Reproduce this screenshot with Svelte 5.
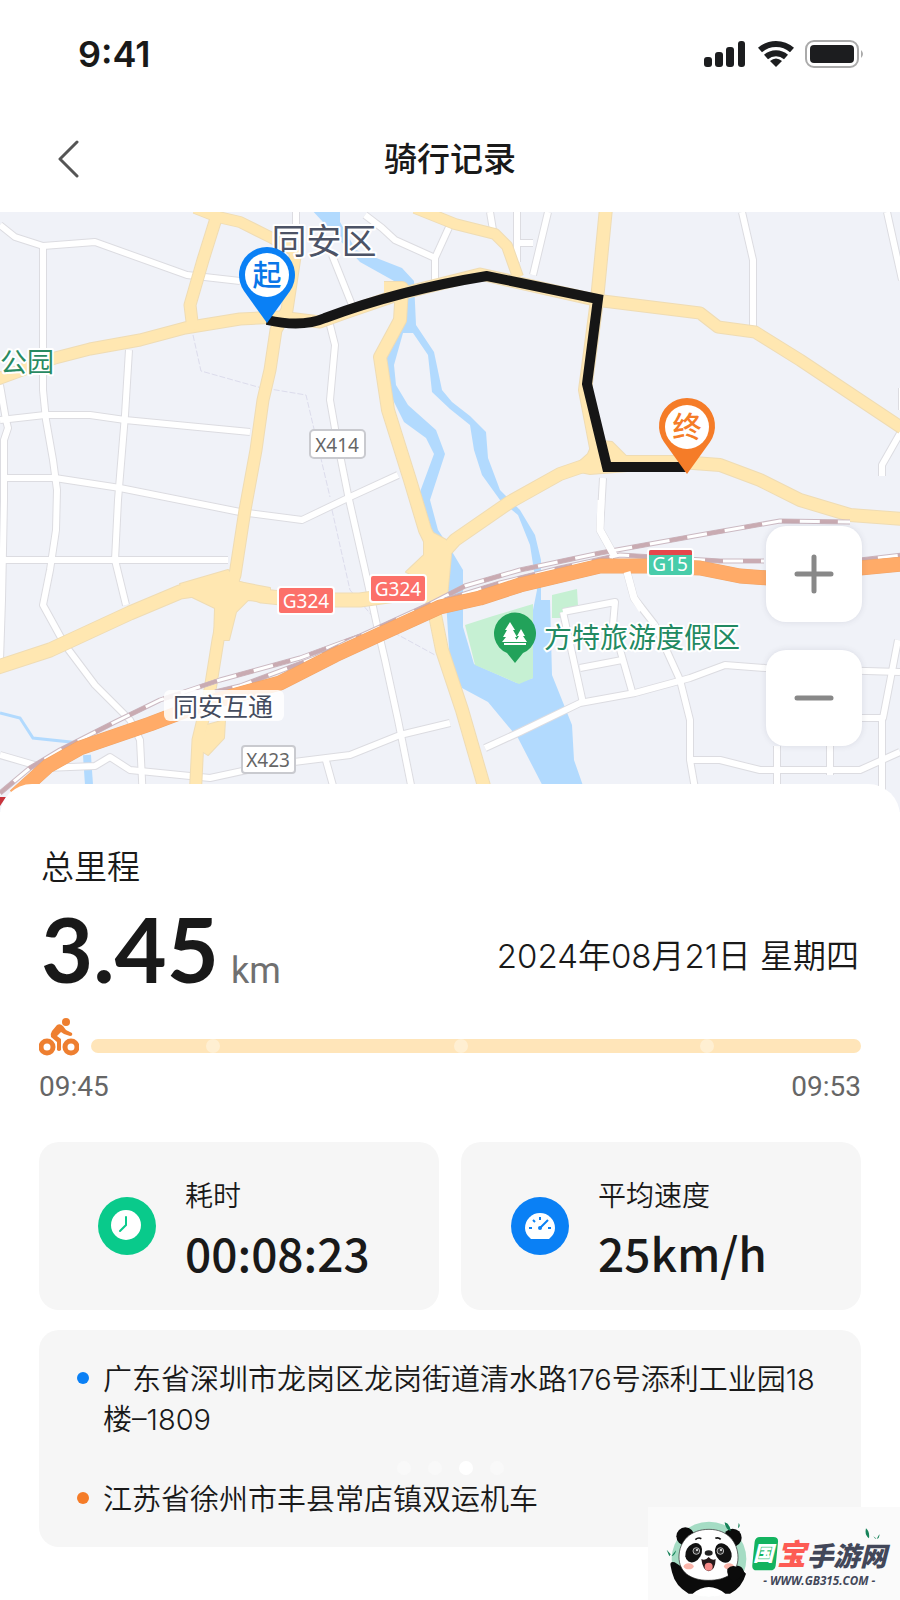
<script lang="ts">
	type Stat = { kind: 'time' | 'speed'; label: string; value: string };

	const stats: Stat[] = [
		{ kind: 'time', label: '耗时', value: '00:08:23' },
		{ kind: 'speed', label: '平均速度', value: '25km/h' }
	];

	const places = [
		{ color: '#0a80f5', text: '广东省深圳市龙岗区龙岗街道清水路176号添利工业园18楼–1809' },
		{ color: '#f57c28', text: '江苏省徐州市丰县常店镇双运机车' }
	];

	// progress bar checkpoints, in percent of the ride
	const checkpoints = [15.8, 48, 80];

	// local streets, thin and white
	const streets = [
		'M0 225L15 237L43 246L95 242L187 275L240 281',
		'M43 246V390L46 420L53 460L57 490L56 530L50 570L43 605L65 645L95 685L130 720L140 740L143 800',
		'M0 420L45 415H90L125 420L250 432',
		'M6 478H55L120 488L240 512L302 520L350 497L398 475',
		'M129 350L125 415L118 500L115 560L126 605',
		'M0 560H228',
		'M330 325L335 345L330 400L337 440L348 495L365 570L378 630L385 660L398 720L414 800',
		'M0 385L6 420L8 428L4 440V500L2 600L0 660',
		'M332 255L352 305M296 212V240',
		'M365 215L382 228L395 240L435 258L450 225M435 258V280',
		'M490 212L493 230M517 212V262M548 212L533 275M517 243H533',
		'M742 212L753 260V330',
		'M887 212L902 280M902 388V410M902 430L882 465V476',
		'M603 478L600 530L615 557M627 572L634 598L655 625',
		'M655 625L680 680L690 720V760L697 800',
		'M485 748L520 732L580 703L635 693L690 678L725 665L765 668L900 672',
		'M563 612L615 602L613 625L633 695M563 612L583 703M580 668L622 660',
		'M690 760H720L760 770H860L900 752M777 746V800M830 746V775M882 718V800M898 640L883 718H850',
		'M0 755L45 768L95 766L110 757L130 770L210 778L270 765L350 755L400 735L450 723M325 757L337 800'
	];

	// main roads, yellow
	const roads = [
		{ w: 11, d: 'M-5 380L55 358L90 349L140 340L185 328L240 319L280 317L320 322L345 313L400 294L480 274L595 300L700 313L718 327L755 332L800 360L902 428' },
		{ w: 11, d: 'M218 212L203 260L190 305L193 330' },
		{ w: 10, d: 'M195 208L218 217L240 222L272 238L293 250' },
		{ w: 11, d: 'M296 250L287 310L276 330L270 370L263 400L256 450L245 510L235 575L226 600L218 640L210 690L198 740L195 800' },
		{ w: 13, d: 'M-5 668L50 650L130 613L180 592L228 585L262 596L300 600H360L430 590' },
		{ w: 12, d: 'M384 288H402L400 320L380 357L388 410L410 480L425 530L437 555L432 600L442 650L462 710L488 800' },
		{ w: 12, d: 'M437 560L455 540L510 502L560 474L595 462H680L720 465L760 480L800 500L850 515L902 519' },
		{ w: 12, d: 'M606 208L597 300L585 390L598 458' },
		{ w: 10, d: 'M415 208L455 224L495 234L507 246L518 277' }
	];

	// widened crossings of the main roads
	const crossings = [
		'M180 584L228 570L239 582L270 588V602L248 600L236 612L229 640L214 640L215 608L188 595Z',
		'M424 528L446 540L451 555L447 598L428 605L425 580L406 572L424 555Z',
		'M570 470L588 454L594 440L612 442L628 458L640 464V470L590 474Z',
		'M207 725L225 720L224 738L208 755L200 750Z'
	];

	const railways = [
		'M0 793L30 768L60 750L115 722L160 700L220 680L300 658L360 636L430 604L465 586L520 570L600 553L700 535L780 521L850 522',
		'M215 692L240 686L315 658L360 636M445 600L500 583L560 568L620 555L720 561H764M860 560L902 555'
	];

	const motorway = 'M15 796L48 766L80 748L150 724L200 705L280 683L335 655L385 632L440 607L480 598L520 585L600 566H650L700 568L740 576L768 578L860 568L902 564';
</script>

<main class="page">
	<header>
		<div class="status">
			<span class="clock">9:41</span>
			<svg width="160" height="30" viewBox="0 0 160 30" role="img" aria-label="信号、无线网络、电量">
				<g fill="#1c1d1f">
					<rect x="0" y="18" width="8" height="10" rx="3" />
					<rect x="11" y="13" width="8" height="15" rx="3" />
					<rect x="22" y="8" width="8" height="20" rx="3" />
					<rect x="34" y="2" width="7" height="26" rx="3" />
					<path d="M72 28L66 22Q72 17 78 22Z" />
					<rect x="106" y="6" width="44" height="18" rx="4" />
				</g>
				<g fill="none" stroke="#1c1d1f" stroke-width="6">
					<path d="M56 11a24 24 0 0 1 32 0" />
					<path d="M62 18a15 15 0 0 1 20 0" />
				</g>
				<rect x="102" y="2" width="52" height="26" rx="8" fill="none" stroke="#aaa" stroke-width="2" />
				<path d="M157 11q4 4 0 8z" fill="#aaa" />
			</svg>
		</div>
		<div class="title-bar">
			<button class="back" aria-label="返回">
				<svg width="22" height="40" viewBox="0 0 22 40"><path d="M20 3L3 20L20 37" fill="none" stroke="#555" stroke-width="3" stroke-linejoin="round" stroke-linecap="round" /></svg>
			</button>
			<h1>骑行记录</h1>
		</div>
	</header>

	<section class="map" aria-label="骑行路线">
		<svg class="canvas" viewBox="0 212 900 600" preserveAspectRatio="xMidYMid slice">
			<rect x="-900" y="212" width="2700" height="600" fill="#f0f2f8" />

			<!-- water and parks -->
			<g fill="#b2dafe">
				<path d="M310 208H340V222L356 250L402 268L414 281L416 325L434 352L442 390L452 402L470 416L486 432L488 458L500 490L520 510L535 535L541 560V600H550L552 675L572 725L574 760L588 800H550L518 738L488 702L462 688L450 665L446 600L445 550L424 530L417 500L434 454L426 438L404 422L388 390L386 360L398 320L403 286L360 262Z" />
			</g>
			<path d="M403 333H413L428 355L432 392L450 409L470 425L474 450L482 475L500 500L518 515L530 545L537 590L533 610V678L517 683L474 664L463 627V570L448 545L438 530L430 500L445 454L436 430L408 405L396 385L394 365Z" fill="#f0f2f8" />
			<path d="M465 625L493 616L533 604V678L519 684L475 665Z M552 595L577 589L578 606L565 612L563 618H552Z" fill="#c6f0d3" />
			<path d="M0 713L20 718L33 738L80 743" fill="none" stroke="#b2dafe" stroke-width="3" />
			<path d="M87 755L90 800" fill="none" stroke="#b2dafe" stroke-width="8" />
			<path d="M193 335L201 371L258 387L306 395L330 497M332 510L350 590L380 625L435 655" fill="none" stroke="#dcdcec" stroke-width="1" stroke-dasharray="6 2" />

			<g class="lines">
				{#each streets as d}<path {d} stroke="#dcdce1" stroke-width="8" />{/each}
				{#each streets as d}<path {d} stroke="#fff" stroke-width="6" />{/each}
				{#each roads as road}<path d={road.d} stroke="#efdcb4" stroke-width={road.w + 2} />{/each}
				{#each crossings as d}<path {d} stroke="#efdcb4" stroke-width="2" />{/each}
				{#each roads as road}<path d={road.d} stroke="#ffe7b1" stroke-width={road.w} />{/each}
			</g>
			{#each crossings as d}<path {d} fill="#ffe7b1" />{/each}

			<g class="lines">
				{#each railways as d}
					<path {d} stroke="#cbb9c2" stroke-width="5" />
					<path {d} stroke="#fff" stroke-width="3" />
					<path {d} stroke="#c9abb2" stroke-width="4" stroke-dasharray="18 20" />
				{/each}
				<path d={motorway} stroke="#f0a467" stroke-width="15" />
				<path d={motorway} stroke="#ffab68" stroke-width="14" />
				<path d="M601 500L600 530L615 557M627 572L634 598L642 610" stroke="#fff" stroke-width="7" />
			</g>
			<path d="M0 797H6L0 806Z" fill="#c8343c" />

			<!-- road numbers -->
			<g class="badge">
				<rect x="310" y="430" width="55" height="28" rx="4" fill="#fff" stroke="#c9cacf" stroke-width="2" />
				<text x="337" y="452" fill="#666">X414</text>
				<rect x="242" y="746" width="53" height="27" rx="3" fill="#fff" stroke="#c9cacf" stroke-width="2" />
				<text x="268" y="767" fill="#666">X423</text>
				<rect x="278" y="587" width="56" height="27" rx="3" fill="#fc7069" stroke="#fff" stroke-width="2" />
				<text x="306" y="608" fill="#fff">G324</text>
				<rect x="370" y="575" width="56" height="27" rx="3" fill="#fc7069" stroke="#fff" stroke-width="2" />
				<text x="398" y="596" fill="#fff">G324</text>
				<rect x="648" y="549" width="45" height="27" rx="3" fill="#48ccaa" stroke="#fff" stroke-width="2" />
				<path d="M649 555V552q0-2 2-2H690q2 0 2 2V555Z" fill="#e5474c" />
				<text x="670" y="571" fill="#fff">G15</text>
			</g>

			<!-- place names -->
			<rect x="164" y="690" width="120" height="31" rx="6" fill="#fff" fill-opacity="0.85" />
			<g class="place">
				<text x="223" y="716" font-size="25" fill="#444c5e">同安互通</text>
				<text x="324" y="254" font-size="35" fill="#4c5366">同安区</text>
				<text x="27" y="372" font-size="27" fill="#288a62">公园</text>
				<text x="642" y="648" font-size="28" fill="#228a62">方特旅游度假区</text>
			</g>
			<path d="M515 663L507 653A21 21 0 1 1 523 653Z" fill="#22a25a" />
			<path d="M510 622L515 630H513L517 637H515L518 642H502L506 637H503L507 630H505Z" fill="#fff" />
			<path d="M521 629L525 636H523L527 642H515L519 636H517Z" fill="#fff" />
			<path d="M504 644H526" stroke="#fff" stroke-width="2" />

			<!-- the ride itself -->
			<path d="M267 320Q302 328 325 318Q400 290 487 276L598 299L587 384L607 467H687" fill="none" stroke="#161616" stroke-width="10" />
			<g class="pin">
				<path d="M267 323L244 291A28 28 0 1 1 290 291Z" fill="#0a80f5" />
				<circle cx="267" cy="275" r="22" fill="#fff" />
				<text x="267" y="286" fill="#0a76e8">起</text>
				<path d="M687 474L664 442A28 28 0 1 1 710 442Z" fill="#f57c28" />
				<circle cx="687" cy="427" r="22" fill="#fff" />
				<text x="687" y="438" fill="#f57c28">终</text>
			</g>
		</svg>

		<div class="zoom">
			<button aria-label="放大">
				<svg width="40" height="40" viewBox="0 0 40 40"><path d="M3 20H37M20 3V37" /></svg>
			</button>
			<button aria-label="缩小">
				<svg width="40" height="40" viewBox="0 0 40 40"><path d="M3 20H37" /></svg>
			</button>
		</div>
	</section>

	<section class="sheet">
		<h2>总里程</h2>
		<div class="summary">
			<p class="distance">3.45<small>km</small></p>
			<time datetime="2024-08-21">2024年08月21日 星期四</time>
		</div>

		<div class="progress">
			<svg width="40" height="38" viewBox="0 0 40 38" aria-hidden="true">
				<g fill="none" stroke="#ee7f30" stroke-width="5">
					<circle cx="8" cy="29" r="6" />
					<circle cx="32" cy="29" r="6" />
				</g>
				<circle cx="27" cy="4" r="4" fill="#ee7f30" />
				<path d="M18 7Q21 5 24 8L27 12L33 15Q34 18 31 18L25 16L22 14L18 18L22 21V32Q20 34 18 32V24L12 19Q11 16 13 13Z" fill="#ee7f30" />
			</svg>
			<div class="bar">
				{#each checkpoints as at}
					<i style="left: {at}%"></i>
				{/each}
			</div>
		</div>
		<div class="times">
			<span>09:45</span>
			<span>09:53</span>
		</div>

		<div class="stats">
			{#each stats as stat}
				<div class="stat">
					<svg width="58" height="58" viewBox="0 0 58 58" aria-hidden="true">
						{#if stat.kind === 'time'}
							<circle cx="29" cy="29" r="29" fill="#09ca8b" />
							<circle cx="28" cy="28" r="15" fill="#fff" />
							<path d="M28 20V28L22 34" fill="none" stroke="#09ca8b" stroke-width="2" stroke-linecap="round" />
						{:else}
							<circle cx="29" cy="29" r="29" fill="#0a80f5" />
							<path d="M20 42Q14 37 14 31A15 15 0 0 1 44 31Q44 37 38 42Z" fill="#fff" />
							<path d="M18 31h3M37 31h3M22 23l2 2M29 20v3M29 31L37 23" fill="none" stroke="#0a80f5" stroke-width="2" />
							<circle cx="29" cy="31" r="2" fill="#0a80f5" />
						{/if}
					</svg>
					<div>
						<p class="label">{stat.label}</p>
						<p class="value">{stat.value}</p>
					</div>
				</div>
			{/each}
		</div>

		<ul class="places">
			{#each places as place}
				<li>
					<i style="background: {place.color}"></i>
					<span>{place.text}</span>
				</li>
			{/each}
		</ul>
		<div class="pager" aria-hidden="true"><i></i><i></i><i class="on"></i><i></i></div>
	</section>

	<div class="brand">
		<svg viewBox="24 50 756 280" role="img" aria-label="国宝手游网">
			<!-- panda -->
			<circle cx="207" cy="206" r="112" fill="#a5dcc4" />
			<path d="M92 228Q88 212 104 216L135 236H270L282 226Q306 222 312 244L318 250Q306 292 270 310H146Q106 288 96 246Z" fill="#0b0b0b" />
			<circle cx="136" cy="138" r="27" fill="#0b0b0b" />
			<circle cx="278" cy="142" r="27" fill="#0b0b0b" />
			<path d="M158 310Q206 270 256 310Q206 330 158 310Z" fill="#fff" />
			<path d="M207 117C262 117 294 155 294 202C294 246 260 270 205 270C150 270 117 244 117 200C117 152 152 117 207 117Z" fill="#fff" stroke="#222" stroke-width="2" />
			<ellipse cx="161" cy="187" rx="23" ry="31" transform="rotate(30 161 187)" fill="#111" />
			<ellipse cx="250" cy="188" rx="23" ry="31" transform="rotate(-30 250 188)" fill="#111" />
			<g stroke="#fff" stroke-width="2">
				<circle cx="169" cy="182" r="10" fill="#333" />
				<circle cx="241" cy="182" r="10" fill="#333" />
			</g>
			<circle cx="171" cy="179" r="3" fill="#fff" />
			<circle cx="243" cy="179" r="3" fill="#fff" />
			<ellipse cx="206" cy="188" rx="12" ry="8" fill="#222" />
			<path d="M184 206Q195 213 206 200Q217 213 227 206Q226 240 206 243Q188 240 184 206Z" fill="#26191a" />
			<ellipse cx="206" cy="229" rx="12" ry="12" fill="#f58987" />
			<ellipse cx="146" cy="228" rx="15" ry="9" fill="#fbb5aa" />
			<ellipse cx="267" cy="228" rx="15" ry="9" fill="#fbb5aa" />
			<path d="M166 148q9-8 18-3M226 144q9-4 16 3" fill="none" stroke="#111" stroke-width="5" />
			<path d="M262 236Q275 222 290 230Q312 236 314 252L280 276Q258 256 262 236Z" fill="#0b0b0b" />
			<path d="M254 96q16 4 18 26q-16-6-18-26ZM296 98q7 9-2 16ZM284 111l8 5ZM80 178l12 14-4 6ZM108 180q-1 14-14 18ZM678 114q12 10 9 30q-14-10-9-30ZM718 132q2 10-8 14ZM700 138l7 5v4Z" fill="#17835a" />
			<!-- wordmark -->
			<path d="M360 140H400Q416 140 414 156L407 226Q405 240 390 240H350Q335 240 337 224L344 154Q346 140 360 140Z" fill="#13b35f" />
			<g class="wordmark">
				<text x="339" y="213" font-size="62" fill="#fff">国</text>
				<text x="410" y="224" font-size="88" fill="#fd5c54">宝</text>
				<text x="500" y="228" font-size="80" fill="#424759">手游网</text>
				<text class="url" x="370" y="284" font-size="35" fill="#424759">- WWW.GB315.COM -</text>
			</g>
		</svg>
	</div>
</main>

<style>
	:global(body) {
		margin: 0;
		background: #fff;
	}

	.page {
		position: relative;
		min-height: 100vh;
		overflow: hidden;
		background: #fff;
		color: #191919;
		font-family: Inter, "Noto Sans CJK SC", sans-serif;
	}

	h1, h2, p, ul {
		margin: 0;
		padding: 0;
		font-weight: 400;
	}

	svg {
		display: block;
		flex: none;
	}

	button {
		display: flex;
		align-items: center;
		justify-content: center;
		padding: 0;
		border: 0;
		cursor: pointer;
	}

	/* top bars */
	.status {
		display: flex;
		align-items: center;
		justify-content: space-between;
		height: 108px;
		padding: 0 36px 0 78px;
	}
	.clock {
		font-size: 36px;
		font-weight: 600;
	}
	.title-bar {
		display: grid;
		grid-template-columns: 60px 1fr 60px;
		align-items: center;
		height: 104px;
		padding: 0 38px 2px;
		box-sizing: border-box;
	}
	.back {
		height: 60px;
		background: none;
	}
	h1 {
		font-size: 33px;
		font-weight: 500;
		line-height: 40px;
		text-align: center;
	}

	/* map */
	.map {
		position: relative;
	}
	.canvas {
		width: 100%;
		height: 600px;
	}
	.lines path {
		fill: none;
		stroke-linejoin: round;
	}
	.badge text {
		font-family: "Noto Sans", sans-serif;
		font-size: 19px;
		text-anchor: middle;
	}
	.place text {
		font-family: "Noto Sans CJK SC", sans-serif;
		text-anchor: middle;
		stroke: #fff;
		stroke-width: 4px;
		stroke-linejoin: round;
		paint-order: stroke;
	}
	.pin text {
		font-family: "Noto Sans CJK SC", sans-serif;
		font-size: 29px;
		font-weight: 500;
		text-anchor: middle;
	}
	.zoom {
		position: absolute;
		top: 314px;
		right: 38px;
		display: flex;
		flex-direction: column;
		gap: 28px;
	}
	.zoom button {
		width: 96px;
		height: 96px;
		border-radius: 20px;
		background: #fff;
		box-shadow: 0 0 6px rgba(60, 60, 80, 0.12);
	}
	.zoom path {
		stroke: #888;
		stroke-width: 5px;
		stroke-linecap: round;
	}

	/* ride details */
	.sheet {
		position: relative;
		margin-top: -28px;
		padding: 64px 39px 52px;
		border-radius: 32px 32px 0 0;
		background: #fff;
	}
	h2 {
		padding-left: 2px;
		font-size: 33px;
		font-weight: 350;
		line-height: 38px;
	}
	.summary {
		display: flex;
		align-items: flex-end;
		justify-content: space-between;
		margin-top: 16px;
		padding: 0 2px;
	}
	.distance {
		display: flex;
		align-items: baseline;
		gap: 12px;
		height: 92px;
		font-family: Lato, sans-serif;
		font-size: 90px;
		font-weight: 700;
		line-height: 92px;
	}
	.distance small {
		color: #707070;
		font-family: Roboto, sans-serif;
		font-size: 36px;
		font-weight: 400;
		line-height: 40px;
	}
	time {
		margin-bottom: 18px;
		font-size: 33px;
		font-weight: 350;
		line-height: 40px;
	}
	.progress {
		display: flex;
		align-items: flex-end;
		gap: 12px;
		margin-top: 24px;
	}
	.bar {
		position: relative;
		flex: 1;
		height: 14px;
		margin-bottom: 3px;
		border-radius: 7px;
		background: #ffe5b9;
	}
	.bar i {
		position: absolute;
		top: 0;
		width: 14px;
		height: 14px;
		margin-left: -7px;
		border-radius: 50%;
		background: #ffefd2;
	}
	.times {
		display: flex;
		justify-content: space-between;
		margin-top: 17px;
		color: #666;
		font-family: Roboto, sans-serif;
		font-size: 28px;
		line-height: 28px;
	}
	.stats {
		display: grid;
		grid-template-columns: 1fr 1fr;
		gap: 22px;
		margin-top: 41px;
	}
	.stat {
		display: flex;
		align-items: center;
		gap: 29px;
		height: 168px;
		padding-left: 59px;
		border-radius: 20px;
		background: #f6f6f6;
	}
	.stat + .stat {
		padding-left: 50px;
	}
	.label {
		font-size: 28px;
		font-weight: 350;
		line-height: 36px;
	}
	.value {
		margin-top: 15px;
		font-family: "Noto Sans CJK SC", sans-serif;
		font-size: 46px;
		font-weight: 500;
		line-height: 46px;
	}
	.places {
		display: flex;
		flex-direction: column;
		gap: 40px;
		margin-top: 20px;
		padding: 30px 38px 27px;
		border-radius: 20px;
		background: #f6f6f6;
		list-style: none;
	}
	.places li {
		display: flex;
		gap: 14px;
		font-size: 29px;
		font-weight: 350;
		line-height: 40px;
	}
	.places i {
		flex: none;
		width: 12px;
		height: 12px;
		margin-top: 12px;
		border-radius: 50%;
	}

	/* carousel dots that float over the places card */
	.pager {
		position: absolute;
		right: 0;
		bottom: 124px;
		left: 0;
		display: flex;
		justify-content: center;
		gap: 17px;
	}
	.pager i {
		width: 14px;
		height: 14px;
		border-radius: 50%;
		background: #f9f9f9;
	}
	.pager .on {
		background: #fff;
	}

	.brand {
		position: absolute;
		right: 0;
		bottom: 0;
		width: 252px;
		background: #fafafa;
	}
	.wordmark text {
		font-family: "Noto Sans CJK SC", sans-serif;
		font-style: italic;
		font-weight: 900;
	}
	.wordmark .url {
		font-family: "Open Sans", sans-serif;
		font-weight: 700;
	}
</style>
